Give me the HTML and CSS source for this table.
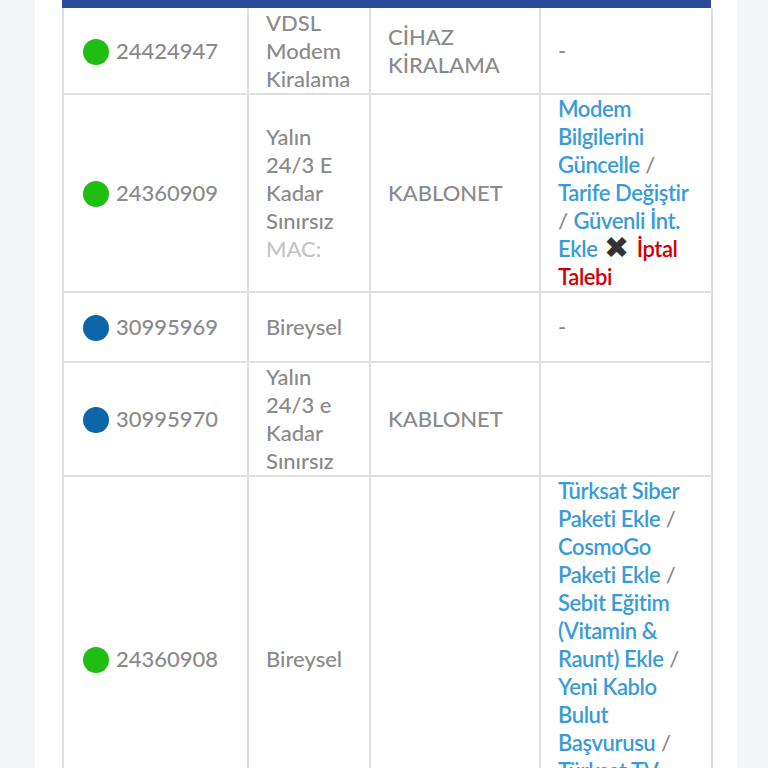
FILE: index.html
```html
<!DOCTYPE html>
<html lang="tr">
<head>
<meta charset="utf-8">
<title>Hizmetler</title>
<link rel="stylesheet" href="styles.css">
</head>
<body>
<div class="panel">
  <div class="head-bar"></div>
  <table class="services">
    <colgroup>
      <col class="c-no">
      <col class="c-name">
      <col class="c-type">
      <col class="c-act">
    </colgroup>
    <tbody>
      <tr>
        <td class="no"><span class="dot green"></span>24424947</td>
        <td>VDSL Modem Kiralama</td>
        <td>CİHAZ KİRALAMA</td>
        <td>-</td>
      </tr>
      <tr>
        <td class="no"><span class="dot green"></span>24360909</td>
        <td>Yalın 24/3 E Kadar Sınırsız <span class="muted">MAC:</span></td>
        <td>KABLONET</td>
        <td class="actions"><a href="#">Modem Bilgilerini Güncelle</a> / <a href="#">Tarife Değiştir</a> / <a href="#">Güvenli İnt. Ekle</a> <span class="x">✖</span> <a href="#" class="cancel">İptal Talebi</a></td>
      </tr>
      <tr>
        <td class="no"><span class="dot blue"></span>30995969</td>
        <td>Bireysel</td>
        <td></td>
        <td>-</td>
      </tr>
      <tr>
        <td class="no"><span class="dot blue"></span>30995970</td>
        <td>Yalın 24/3 e Kadar Sınırsız</td>
        <td>KABLONET</td>
        <td></td>
      </tr>
      <tr>
        <td class="no"><span class="dot green"></span>24360908</td>
        <td>Bireysel</td>
        <td></td>
        <td class="actions"><a href="#">Türksat Siber Paketi Ekle</a> / <a href="#">CosmoGo Paketi Ekle</a> / <a href="#">Sebit Eğitim (Vitamin &amp; Raunt) Ekle</a> / <a href="#">Yeni Kablo Bulut Başvurusu</a> / <a href="#">Türksat TV Paketi Ekle</a> / <a href="#">Tarife Değiştir</a></td>
      </tr>
    </tbody>
  </table>
</div>
</body>
</html>
```
FILE: styles.css
```css
html, body {
  margin: 0;
  padding: 0;
  background: #f4f5f7;
  height: 100%;
  overflow: hidden;
}
body {
  font-family: Lato, "Open Sans", sans-serif;
  font-size: 22px;
  font-weight: 500;
  line-height: 28px;
  color: #8a8a8a;
}
.panel {
  margin-left: 35px;
  width: 649px;
  padding: 0 26px 0 27px;
  background: #ffffff;
  min-height: 100%;
}
.head-bar {
  height: 8px;
  background: #2c4b9c;
  width: 649px;
}
.services {
  border-collapse: collapse;
  table-layout: fixed;
  width: 649px;
}
.c-no { width: 185px; }
.c-name { width: 122px; }
.c-type { width: 170px; }
.c-act { width: 172px; }
.services td {
  border: 2px solid #dedede;
  padding: 0 16px 0 17px;
  height: 68px;
  vertical-align: middle;
}
.services tr:first-child td {
  border-top: 0;
  padding-top: 1px;
}
.services td.no {
  padding-left: 19px;
  white-space: nowrap;
}
.dot {
  display: inline-block;
  width: 26px;
  height: 26px;
  border-radius: 50%;
  margin-right: 7px;
  vertical-align: -6px;
}
.dot.green { background: #1fbe10; }
.dot.blue { background: #0c65a7; }
.muted { color: #c4c4c4; }
.actions a {
  color: #3a9bd7;
  font-weight: 600;
  letter-spacing: -0.4px;
  text-decoration: none;
}
.actions a.cancel { color: #cc0000; }
.x {
  display: inline-block;
  color: #333333;
  font-size: 30px;
  line-height: 20px;
  margin: 0 2px 0 1px;
  vertical-align: -1px;
}
```
